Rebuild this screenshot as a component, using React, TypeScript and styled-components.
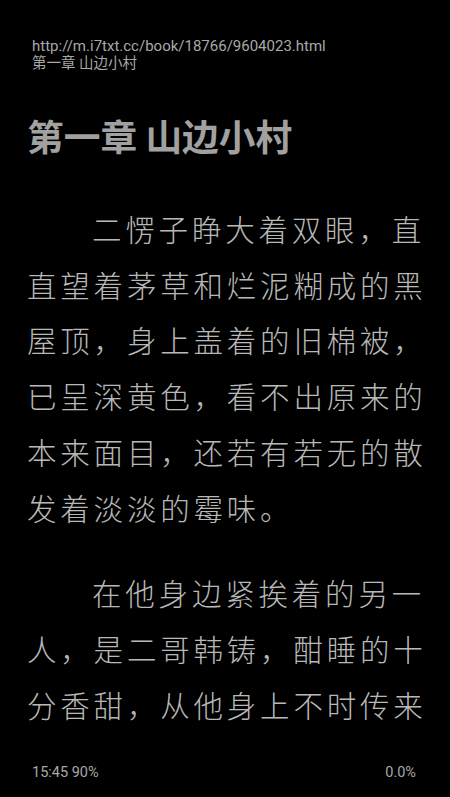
import styled, { createGlobalStyle } from 'styled-components'

const GlobalStyle = createGlobalStyle`
  html, body {
    margin: 0;
    padding: 0;
    background: #000;
  }
  * {
    box-sizing: border-box;
  }
`

const paragrafos = [
  '二愣子睁大着双眼，直直望着茅草和烂泥糊成的黑屋顶，身上盖着的旧棉被，已呈深黄色，看不出原来的本来面目，还若有若无的散发着淡淡的霉味。',
  '在他身边紧挨着的另一人，是二哥韩铸，酣睡的十分香甜，从他身上不时传来',
]

const App = () => {
  return (
    <>
      <GlobalStyle />
      <Pagina>
        <Cabecalho>
          <Linha $tamanho={15}>http://m.i7txt.cc/book/18766/9604023.html</Linha>
          <Linha $tamanho={14.5}>第一章 山边小村</Linha>
        </Cabecalho>
        <Conteudo>
          <Titulo>第一章 山边小村</Titulo>
          {paragrafos.map((texto, i) => (
            <Paragrafo key={i}>{texto}</Paragrafo>
          ))}
        </Conteudo>
        <Rodape>
          <span>15:45 90%</span>
          <span>0.0%</span>
        </Rodape>
      </Pagina>
    </>
  )
}

const Pagina = styled.div`
  width: 450px;
  height: 797px;
  background: #000;
  display: flex;
  flex-direction: column;
  overflow: hidden;
`

const Cabecalho = styled.header`
  padding: 38px 20px 0 32px;
  display: flex;
  flex-direction: column;
`

const Linha = styled.div<{ $tamanho: number }>`
  font-family: Roboto, 'Noto Sans CJK SC', sans-serif;
  font-size: ${(p) => p.$tamanho}px;
  line-height: 17px;
  color: #a8a8a8;
  white-space: nowrap;
`

const Conteudo = styled.main`
  flex: 1;
  overflow: hidden;
  padding: 0 14px 0 27px;
`

const Titulo = styled.h1`
  margin: 41px 0 0;
  font-family: 'Noto Sans CJK SC', sans-serif;
  font-size: 36.7px;
  font-weight: 700;
  line-height: 44px;
  color: #a1a1a1;
`

const Paragrafo = styled.p`
  margin: 0 0 30px;
  font-family: 'Noto Sans CJK SC', sans-serif;
  font-size: 29.5px;
  font-weight: 300;
  letter-spacing: 3.8px;
  line-height: 55.7px;
  text-indent: 65px;
  color: #b8b8b8;

  &:first-of-type {
    margin-top: 44px;
  }
`

const Rodape = styled.footer`
  padding: 23px 34px 16px 32px;
  display: flex;
  justify-content: space-between;
  font-family: Roboto, sans-serif;
  font-size: 14.5px;
  line-height: 17px;
  color: #a8a8a8;
`

export default App
